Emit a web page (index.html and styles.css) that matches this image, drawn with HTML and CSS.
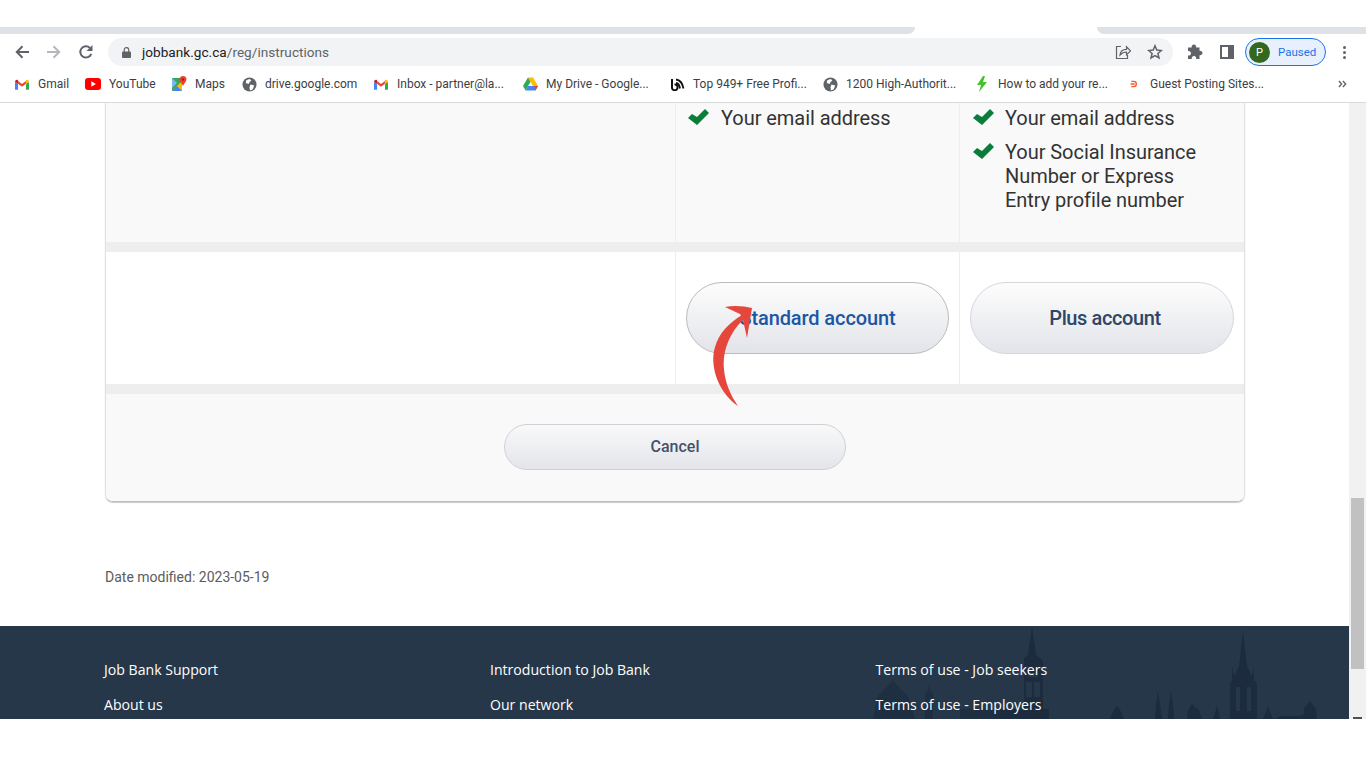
FILE: index.html
```html
<!DOCTYPE html>
<html lang="en">
<head>
<meta charset="utf-8">
<title>Job Bank - Instructions</title>
<link rel="stylesheet" href="styles.css">
</head>
<body>
<div class="top-blank"></div>
<div class="tabstrip"><div class="tab-left"></div><div class="tab-right"></div></div>
<div class="toolbar">
  <svg class="nav" viewBox="0 0 16 16"><path d="M15 8H3M8.500 2.300 2.800 8l5.700 5.700" fill="none" stroke="#5f6368" stroke-width="2"/></svg>
  <svg class="nav" viewBox="0 0 16 16"><path d="M1 8H13M7.500 2.300 13.200 8l-5.700 5.700" fill="none" stroke="#b4b7bb" stroke-width="2"/></svg>
  <svg class="nav" viewBox="0 0 16 16"><path d="M13.200 9.800A5.600 5.600 0 1 1 12 4.100" fill="none" stroke="#5f6368" stroke-width="2"/><path d="M14.500 1v6h-6z" fill="#5f6368"/></svg>
  <div class="omnibox">
    <svg class="lock" viewBox="0 0 10 12"><path d="M1 5h8a1 1 0 0 1 1 1v5a1 1 0 0 1-1 1H1a1 1 0 0 1-1-1V6a1 1 0 0 1 1-1z" fill="#5f6368"/><path d="M2.500 5.500V3a2.500 2.500 0 0 1 5 0v2.500" fill="none" stroke="#5f6368" stroke-width="1.300"/></svg>
    <span class="url"><b>jobbank.gc.ca</b>/reg/instructions</span>
    <svg class="share" viewBox="0 0 16 16"><path d="M6 2.500H1.500v12h11V11" fill="none" stroke="#5f6368" stroke-width="1.200"/><path d="M5 11c.4-3.700 3-5.600 6.500-5.600V2.800L15.500 6.800l-4 4V8C8.800 8 6.800 9 5 11z" fill="none" stroke="#5f6368" stroke-width="1.200"/></svg>
    <svg class="star" viewBox="0 0 16 16"><path d="m8 1.800 1.800 4.300 4.600.4-3.500 3 1.100 4.500L8 11.600 4 14l1.100-4.500-3.500-3 4.600-.4z" fill="none" stroke="#5f6368" stroke-width="1.500"/></svg>
  </div>
  <svg class="ext" viewBox="0 0 16 16"><path d="M1 3.500h3.700a2.300 2.300 0 1 1 4.400 0h3.400v3.300a2.300 2.300 0 1 1 0 4.400V15H9.200a2.300 2.300 0 1 0-4.400 0H1v-3.500a2.300 2.300 0 1 0 0-4.400z" fill="#5f6368"/></svg>
  <svg class="side" viewBox="0 0 14 14"><path d="M0 0h14v14H0z" fill="#5f6368"/><path d="M2 2h6v10H2z" fill="#fff"/></svg>
  <div class="profile"><span class="avatar">P</span><span class="paused">Paused</span></div>
  <div class="dots"><i></i><i></i><i></i></div>
</div>
<div class="bookmarks">
  <a class="bm bm-gmail"><span class="ico"><svg class="i-mail" viewBox="0 0 16 12"><path d="M0 3v8a1 1 0 0 0 1 1h2.500V5z" fill="#4285f4"/><path d="M16 3v8a1 1 0 0 1-1 1h-2.500V5z" fill="#34a853"/><path d="M3.500 5v-3L8 5.500 12.500 2v3L8 8.500z" fill="#ea4335"/><path d="M0 3c0-2 2-3.300 3.500-2v4z" fill="#c5221f"/><path d="M16 3c0-2-2-3.300-3.500-2v4z" fill="#fbbc04"/></svg></span>Gmail</a>
  <a class="bm bm-yt"><span class="ico"><svg class="i-yt" viewBox="0 0 16 12"><rect width="16" height="12" rx="3" fill="#f00"/><path d="m6.300 3.300 4.600 2.700-4.600 2.700z" fill="#fff"/></svg></span>YouTube</a>
  <a class="bm bm-maps"><span class="ico"><svg class="i-maps" viewBox="0 0 16 16"><path d="M1 2h10v13H1z" fill="#34a853"/><path d="M1 15 11 5v10z" fill="#fbbc04"/><path d="M1 15l5-5 5 5z" fill="#4285f4"/><path d="M1 2l5 5-5 5z" fill="#7fb6f0"/><path d="M12 0a3.500 3.500 0 0 1 3.500 3.500c0 2.300-2.500 3.700-3.500 6.500-1-2.800-3.500-4.200-3.500-6.500A3.500 3.500 0 0 1 12 0z" fill="#ea4335"/><circle cx="12" cy="3.500" r="1.200" fill="#a51b12"/></svg></span>Maps</a>
  <a class="bm bm-globe"><span class="ico"><svg class="i-globe" viewBox="0 0 16 16"><circle cx="8" cy="8" r="7.500" fill="#5f6368"/><path d="M4.500 3.500 8 2l2 1.500-2 2-1 2-3-1zM9 8l4 1-1.500 4-3 1.500L8 11z" fill="#fff"/></svg></span>drive.google.com</a>
  <a class="bm bm-inbox"><span class="ico"><svg class="i-mail" viewBox="0 0 16 12"><path d="M0 3v8a1 1 0 0 0 1 1h2.500V5z" fill="#4285f4"/><path d="M16 3v8a1 1 0 0 1-1 1h-2.500V5z" fill="#34a853"/><path d="M3.500 5v-3L8 5.500 12.500 2v3L8 8.500z" fill="#ea4335"/><path d="M0 3c0-2 2-3.300 3.500-2v4z" fill="#c5221f"/><path d="M16 3c0-2-2-3.300-3.500-2v4z" fill="#fbbc04"/></svg></span>Inbox - partner@la...</a>
  <a class="bm bm-drive"><span class="ico"><svg class="i-drive" viewBox="0 0 16 14"><path d="M5.300 0h5.400l5.300 9.200h-5.400z" fill="#fbbc04"/><path d="M5.300 0 0 9.200l2.700 4.600 5.300-9.200z" fill="#34a853"/><path d="M2.700 13.800h10.600L16 9.200H5.300z" fill="#4285f4"/><path d="M13.300 13.800 16 9.200h-4z" fill="#ea4335"/></svg></span>My Drive - Google...</a>
  <a class="bm bm-top"><span class="ico"><svg class="i-top" viewBox="0 0 15 13"><path d="M6 1.500c4 .5 6.500 3.500 7.500 9M6 5c2 .3 3.500 2 4 5.500" fill="none" stroke="#111" stroke-width="1.800"/><path d="M2 1v8a2.800 2.800 0 1 0 5.500 0A2.800 2.800 0 0 0 4.500 6.400" fill="none" stroke="#111" stroke-width="2"/></svg></span>Top 949+ Free Profi...</a>
  <a class="bm bm-high"><span class="ico"><svg class="i-globe" viewBox="0 0 16 16"><circle cx="8" cy="8" r="7.500" fill="#5f6368"/><path d="M4.500 3.500 8 2l2 1.500-2 2-1 2-3-1zM9 8l4 1-1.500 4-3 1.500L8 11z" fill="#fff"/></svg></span>1200 High-Authorit...</a>
  <a class="bm bm-bolt"><span class="ico"><svg class="i-bolt" viewBox="0 0 12 16"><path d="M7 0 1 9h4L3 16l8-10H7l2-6z" fill="#43c22e"/></svg></span>How to add your re...</a>
  <a class="bm bm-guest"><span class="ico"><svg class="i-guest" viewBox="0 0 12 12"><path d="M2 2h3.500a4 4 0 0 1 0 8H2M1 6h6" fill="none" stroke="#f4572a" stroke-width="2"/></svg></span>Guest Posting Sites...</a>
  <svg class="more" viewBox="0 0 10 8"><path d="M1 .7 4 4 1 7.300M5.500.7 8.500 4l-3 3.300" fill="none" stroke="#5f6368" stroke-width="1.500"/></svg>
</div>
<div class="viewport">
  <main class="page">
    <section class="content">
      <div class="card">
        <div class="row row-info">
          <div class="cell cell-label"></div>
          <div class="cell cell-a"><ul class="checks"><li>Your email address</li></ul></div>
          <div class="cell cell-b"><ul class="checks"><li>Your email address</li><li>Your Social Insurance Number or Express Entry profile number</li></ul></div>
        </div>
        <div class="row row-buttons">
          <div class="cell cell-label"></div>
          <div class="cell cell-a"><button class="pill pill-std">Standard account</button></div>
          <div class="cell cell-b"><button class="pill pill-plus">Plus account</button></div>
        </div>
        <div class="row-cancel"><button class="pill-cancel">Cancel</button></div>
      </div>
      <svg class="arrow" viewBox="0 0 44 106"><path d="M27 101C8 88-2 62 4 42 8 28 18 18 31 10L14 2C23 0 33 1 41 3L36 33 32 15C18 28 11 48 13 64 14 78 20 91 27 101Z" fill="#e5473c"/></svg>
      <p class="modified">Date modified: 2023-05-19</p>
    </section>
    <footer class="footer">
      <svg class="skyline" viewBox="-140 0 480 93" preserveAspectRatio="none">
        <path class="sky-faint" d="M-127 93-122 70Q-112 60-107 54-102 62-92 70L-85 93ZM-75 93V67l3-3 1-7 1 7 3 3V93ZM-40 93V83H0V93Z"/>
        <path class="sky-dark" d="M0 93V83h24V32l4-3 4-29 4 29 4 3 3 3v48h6v10zM110 93l4-9 3-4 3 4 4 9zM155 93l1-15 2-12 2 12 2 15zM168 93l1-15 2-12 2 12 1 15zM187 93l1-8 4-7 4 4 3 2 3 9zM213 93l2-6 2-7 2 7 1 6zM230 93V58l2-4v-14l2 10 5-10 4-35 4 35 5 10 2-10v14l3 4v35zM263 93l3-7 2-6 2 6 3 7zM275 93l5-3h20l4-2v-6l3-3 3-4 3 4 3 4 1 10z"/>
        <path class="sky-light" d="M28 47h10v4H28zM26 56h6v15h-6zM34 56h6v15h-6zM236 61h4v24h-4zM247 61h4v24h-4z"/>
      </svg>
      <div class="foot-col"><a>Job Bank Support</a><a>About us</a></div>
      <div class="foot-col"><a>Introduction to Job Bank</a><a>Our network</a></div>
      <div class="foot-col"><a>Terms of use - Job seekers</a><a>Terms of use - Employers</a></div>
    </footer>
  </main>
  <div class="scrollbar">
    <div class="sb-thumb"></div>
    <div class="sb-down"></div>
  </div>
</div>
</body>
</html>
```
FILE: styles.css
```css
* { box-sizing: border-box; }
html, body { margin: 0; padding: 0; height: 768px; overflow: hidden; background: #fff; }
body { font-family: "Roboto", "Liberation Sans", sans-serif; }

.top-blank { height: 27px; background: #fff; }
.tabstrip { height: 7px; display: flex; justify-content: space-between; }
.tab-left { width: 915px; background: #dee1e6; border-bottom-right-radius: 7px; }
.tab-right { width: 269px; background: #dee1e6; border-bottom-left-radius: 7px; }

.toolbar { height: 36px; display: flex; align-items: center; padding: 0 0 0 14px; background: #fff; }
.nav { width: 16px; height: 16px; margin-right: 16px; flex: none; }
.omnibox { width: 1065px; height: 28px; margin-left: -2px; border-radius: 14px; background: #f1f3f4; display: flex; align-items: center; padding: 0 10px 0 14px; }
.lock { width: 9px; height: 11px; flex: none; }
.url { margin-left: 11px; font: 13.600px "Roboto", sans-serif; color: #5f6368; letter-spacing: 0.02px; }
.url b { font-weight: 400; color: #202124; }
.share { width: 16px; height: 16px; margin-left: auto; }
.star { width: 16px; height: 16px; margin-left: 16px; }
.ext { width: 16px; height: 16px; margin-left: 14px; flex: none; }
.side { width: 14px; height: 14px; margin-left: 17px; flex: none; }
.profile { width: 81px; height: 28px; margin-left: 11px; flex: none; border: 1px solid #1a73e8; border-radius: 14px; background: #e8f0fe; display: flex; align-items: center; padding-left: 3px; }
.avatar { width: 21px; height: 21px; border-radius: 50%; background: #33691e; color: #fff; font-size: 11px; display: flex; align-items: center; justify-content: center; }
.paused { margin-left: 8px; font-size: 11.500px; color: #1a73e8; }
.dots { margin-left: 17px; display: flex; flex-direction: column; gap: 2px; }
.dots i { display: block; width: 3px; height: 3px; border-radius: 50%; background: #5f6368; }

.bookmarks { height: 33px; display: flex; align-items: flex-start; padding: 3px 0 0 14px; border-bottom: 1px solid #d8d9da; position: relative; background: #fff; }
.bm { display: flex; align-items: center; height: 22px; font-size: 12px; color: #3c4043; white-space: nowrap; flex: none; }
.ico { width: 24px; padding-right: 8px; display: flex; align-items: center; justify-content: center; flex: none; }
.i-mail { width: 14px; height: 11px; }
.i-yt { width: 16px; height: 12px; }
.i-maps { width: 16px; height: 16px; }
.i-globe { width: 15px; height: 15px; }
.i-drive { width: 15px; height: 14px; }
.i-top { width: 15px; height: 13px; }
.i-bolt { width: 12px; height: 16px; }
.i-guest { width: 8px; height: 8px; }
.bm-gmail { width: 71px; }
.bm-yt { width: 86px; }
.bm-maps { width: 70px; }
.bm-globe { width: 132px; }
.bm-inbox { width: 149px; }
.bm-drive { width: 147px; }
.bm-top { width: 153px; }
.bm-high { width: 152px; }
.bm-bolt { width: 152px; }
.more { position: absolute; right: 19px; top: 10px; width: 9px; height: 8px; }

.viewport { height: 616px; display: flex; overflow: hidden; }
.page { width: 1349px; flex: none; display: flex; flex-direction: column; }
.content { position: relative; height: 523px; padding: 0 104px 0 105px; background: #fff; }

.card { width: 1140px; height: 399px; border: 1px solid #e0e0e0; border-top: 0; border-radius: 0 0 8px 8px; border-bottom-color: #bdbdbd; box-shadow: 0 1px 1px #ccc; overflow: hidden; }
.row { display: grid; grid-template-columns: 569px 284px 285px; }
.row-info { height: 139px; background: #f9f9f9; }
.row-buttons { height: 142px; background: #fff; border-top: 10px solid #eee; }
.row-cancel { height: 117px; background: #f9f9f9; border-top: 10px solid #eee; display: flex; justify-content: center; padding-top: 30px; }
.cell-a, .cell-b { border-left: 1px solid #eee; }
.row-buttons .cell { padding: 30px 0 0 10px; }

.checks { list-style: none; margin: 0; padding: 3px 0 0 12px; }
.checks li { position: relative; padding-left: 33px; margin-bottom: 10px; font: 20px/24px "Roboto", sans-serif; letter-spacing: -0.05px; color: #333; width: 240px; }
.checks li::before { content: ""; position: absolute; left: 0; top: 3px; width: 21px; height: 16px; background: #0b7c3a; clip-path: polygon(0 9px, 4px 5px, 9px 8px, 17px 0, 21px 4px, 9px 16px); }
.cell-b .checks { padding-left: 13px; }
.cell-b .checks li { padding-left: 32px; }

.pill { display: block; height: 72px; border-radius: 36px; border: 1px solid #bbb; background: linear-gradient(#fdfdfd, #e2e4e9); font: 500 20px "Roboto", sans-serif; letter-spacing: -0.1px; }
.pill-std { width: 263px; color: #1b56a6; }
.pill-plus { width: 264px; color: #2f4668; border-color: #d5d7dc; letter-spacing: -0.4px; padding-left: 12px; }
.pill-cancel { width: 342px; height: 46px; border-radius: 23px; border: 1px solid #cfd1d6; background: linear-gradient(#f9f9fa, #e3e5ea); font: 500 16px "Roboto", sans-serif; color: #43526b; padding-bottom: 3px; }

.arrow { position: absolute; left: 711px; top: 202px; width: 44px; height: 106px; }
.modified { margin: 65px 0 0; font: 14px/20px "Roboto", sans-serif; color: #5c5c5c; }

.footer { position: relative; height: 93px; background: #26374a; padding: 34px 0 0 104px; display: grid; grid-template-columns: 386px 385.500px 386px; overflow: hidden; }
.foot-col { position: relative; display: flex; flex-direction: column; gap: 15px; }
.foot-col a { font: 500 14.100px/20px "Open Sans", sans-serif; color: #fff; white-space: nowrap; }
.skyline { position: absolute; left: 860px; top: 0; width: 480px; height: 93px; }
.sky-faint { fill: #1f2f42; }
.sky-dark { fill: #1c2b3d; }
.sky-light { fill: #26374a; }

.scrollbar { width: 17px; flex: none; background: #f1f1f1; position: relative; }
.sb-thumb { position: absolute; left: 2px; top: 395px; width: 13px; height: 171px; background: #c1c1c1; }
.sb-down { position: absolute; left: 4px; bottom: 0; width: 9px; height: 2px; background: #505050; }
```
